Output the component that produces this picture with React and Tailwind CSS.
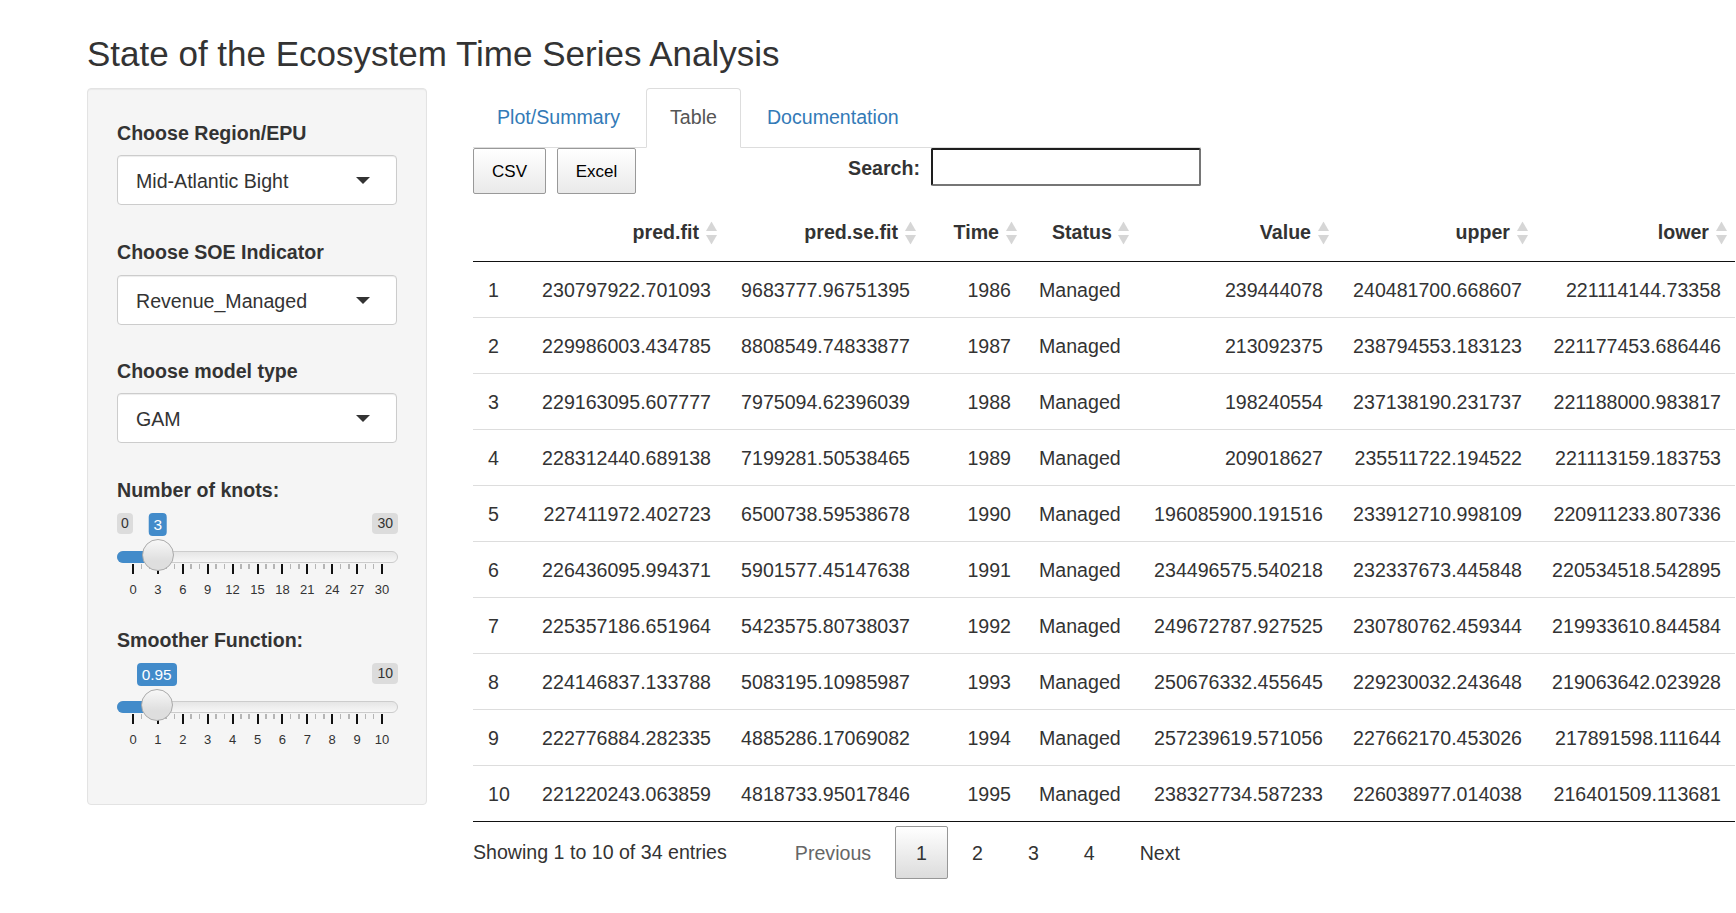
import React from "react";

const rows = [
  ["1", "230797922.701093", "9683777.96751395", "1986", "Managed", "239444078", "240481700.668607", "221114144.73358"],
  ["2", "229986003.434785", "8808549.74833877", "1987", "Managed", "213092375", "238794553.183123", "221177453.686446"],
  ["3", "229163095.607777", "7975094.62396039", "1988", "Managed", "198240554", "237138190.231737", "221188000.983817"],
  ["4", "228312440.689138", "7199281.50538465", "1989", "Managed", "209018627", "235511722.194522", "221113159.183753"],
  ["5", "227411972.402723", "6500738.59538678", "1990", "Managed", "196085900.191516", "233912710.998109", "220911233.807336"],
  ["6", "226436095.994371", "5901577.45147638", "1991", "Managed", "234496575.540218", "232337673.445848", "220534518.542895"],
  ["7", "225357186.651964", "5423575.80738037", "1992", "Managed", "249672787.927525", "230780762.459344", "219933610.844584"],
  ["8", "224146837.133788", "5083195.10985987", "1993", "Managed", "250676332.455645", "229230032.243648", "219063642.023928"],
  ["9", "222776884.282335", "4885286.17069082", "1994", "Managed", "257239619.571056", "227662170.453026", "217891598.111644"],
  ["10", "221220243.063859", "4818733.95017846", "1995", "Managed", "238327734.587233", "226038977.014038", "216401509.113681"],
];

const headers = [
  { t: "", align: "right", sort: false },
  { t: "pred.fit", align: "right", sort: true },
  { t: "pred.se.fit", align: "right", sort: true },
  { t: "Time", align: "right", sort: true },
  { t: "Status", align: "left", sort: true },
  { t: "Value", align: "right", sort: true },
  { t: "upper", align: "right", sort: true },
  { t: "lower", align: "right", sort: true },
];

function SortIcon() {
  return (
    <svg width="11" height="23" viewBox="0 0 11 23" className="absolute right-[8px] top-1/2 -translate-y-1/2">
      <path d="M5.5 0 L11 9.5 L0 9.5 Z" fill="#d6d6d6" />
      <path d="M0 13.5 L11 13.5 L5.5 23 Z" fill="#d6d6d6" />
    </svg>
  );
}

function Caret() {
  return (
    <svg width="14" height="7" viewBox="0 0 14 7" className="shrink-0">
      <path d="M0 0 L14 0 L7 7 Z" fill="#333333" />
    </svg>
  );
}

function SelectBox({ value }) {
  return (
    <div className="h-[50px] w-[280px] flex items-center justify-between pl-[18px] pr-[26px] bg-white border border-[#cccccc] rounded-[4px] shadow-[inset_0_1px_1px_rgba(0,0,0,0.075)] text-[19.6px] text-[#333333]">
      <span className="pt-[3px]">{value}</span>
      <Caret />
    </div>
  );
}

function Label({ children, className = "" }) {
  return <div className={"h-[28px] leading-[28px] text-[19.6px] font-bold text-[#333333] " + className}>{children}</div>;
}

function Slider({ max, value, label, showMin, ticks }) {
  const x0 = 16;
  const span = 249;
  const cx = x0 + (span * value) / max;
  const n = ticks.length - 1;
  const step = span / n;
  const minors = [];
  for (let i = 0; i < n; i++) {
    minors.push(x0 + step * i + step / 3);
    minors.push(x0 + step * i + (2 * step) / 3);
  }
  return (
    <div className="relative h-[95px] w-[281px]">
      {showMin && (
        <div className="absolute left-0 top-[9px] h-[21px] px-[4px] rounded-[4px] bg-[#dcdcdc] text-[14px] leading-[21px] text-[#333333]">0</div>
      )}
      <div className="absolute right-0 top-[9px] h-[21px] px-[5px] rounded-[4px] bg-[#dcdcdc] text-[14px] leading-[21px] text-[#333333]">{max}</div>
      <div
        className="absolute top-[9px] h-[23px] px-[5px] rounded-[4px] bg-[#428bca] text-white text-[15.4px] leading-[23px] -translate-x-1/2"
        style={{ left: cx }}
      >
        {label}
      </div>
      <div className="absolute left-0 top-[47px] h-[12px] w-[281px] rounded-full border border-[#cccccc] bg-[linear-gradient(to_bottom,#dddddd_-50%,#ffffff_150%)]" />
      <div className="absolute left-0 top-[47px] h-[12px] rounded-l-full bg-[#428bca]" style={{ width: cx }} />
      {minors.map((m, i) => (
        <div key={"m" + i} className="absolute top-[60px] h-[5px] w-[1.5px] bg-[#b5b5b5]" style={{ left: m - 0.75 }} />
      ))}
      {ticks.map((t, i) => (
        <div key={"t" + i} className="absolute top-[60px] h-[10px] w-[2px] bg-[#111111]" style={{ left: x0 + step * i - 1 }} />
      ))}
      {ticks.map((t, i) => (
        <div
          key={"l" + i}
          className="absolute top-[79px] text-[13px] leading-[14px] text-[#333333] -translate-x-1/2"
          style={{ left: x0 + step * i }}
        >
          {t}
        </div>
      ))}
      <div
        className="absolute top-[35px] h-[32px] w-[32px] rounded-full border border-[#aaaaaa] bg-[linear-gradient(to_bottom,#ffffff_-20%,#dedede_70%)] -translate-x-1/2"
        style={{ left: cx }}
      />
    </div>
  );
}

const gridCols = "grid grid-cols-[55px_197px_199px_101px_112px_200px_199px_199px]";

export default function App() {
  return (
    <div className="w-[1736px] h-[913px] overflow-hidden bg-white text-[#333333] font-['Liberation_Sans',Arial,sans-serif]">
      <div className="pl-[87px] pt-[34px]">
        <h2 className="h-[40px] leading-[40px] text-[35px] font-normal text-[#333333]">State of the Ecosystem Time Series Analysis</h2>
      </div>
      <div className="flex pl-[87px] mt-[14px]">
        {/* Sidebar */}
        <div className="w-[340px] h-[717px] shrink-0 bg-[#f5f5f5] border border-[#e3e3e3] rounded-[4px] shadow-[inset_0_1px_1px_rgba(0,0,0,0.05)] pl-[29px] pt-[30px]">
          <Label className="mb-[8px]">Choose Region/EPU</Label>
          <SelectBox value="Mid-Atlantic Bight" />
          <Label className="mt-[33px] mb-[9px]">Choose SOE Indicator</Label>
          <SelectBox value="Revenue_Managed" />
          <Label className="mt-[32px] mb-[8px]">Choose model type</Label>
          <SelectBox value="GAM" />
          <Label className="mt-[33px]">Number of knots:</Label>
          <Slider max={30} value={3} label="3" showMin={true} ticks={[0, 3, 6, 9, 12, 15, 18, 21, 24, 27, 30]} />
          <Label className="mt-[27px]">Smoother Function:</Label>
          <Slider max={10} value={0.95} label="0.95" showMin={false} ticks={[0, 1, 2, 3, 4, 5, 6, 7, 8, 9, 10]} />
        </div>

        {/* Main */}
        <div className="ml-[46px] w-[728px] shrink-0">
          {/* Tabs */}
          <div className="flex items-end h-[60px] border-b border-[#dddddd] text-[19.6px]">
            <div className="ml-[1px] mr-[3px] h-[59px] px-[22px] pt-[14px] border border-transparent leading-[28px] text-[#337ab7]">Plot/Summary</div>
            <div className="mr-[3px] h-[60px] -mb-px px-[23px] pt-[14px] border border-[#dddddd] border-b-white bg-white rounded-t-[4px] leading-[28px] text-[#555555]">Table</div>
            <div className="h-[59px] px-[22px] pt-[14px] border border-transparent leading-[28px] text-[#337ab7]">Documentation</div>
          </div>

          {/* Toolbar */}
          <div className="flex justify-between items-start h-[46px] mb-[11px]">
            <div className="flex gap-[11px]">
              <div className="h-[46px] w-[73px] flex items-center justify-center pt-[1px] border border-[#999999] rounded-[2px] bg-[linear-gradient(to_bottom,#ffffff_0%,#e9e9e9_100%)] text-[17px] text-black">CSV</div>
              <div className="h-[46px] w-[79px] flex items-center justify-center pt-[1px] border border-[#999999] rounded-[2px] bg-[linear-gradient(to_bottom,#ffffff_0%,#e9e9e9_100%)] text-[17px] text-black">Excel</div>
            </div>
            <div className="flex items-start">
              <div className="mt-[6px] mr-[11px] leading-[28px] text-[19.6px] font-bold text-[#333333]">Search:</div>
              <div className="h-[38px] w-[270px] bg-white border-2 border-solid border-t-[#1e1e1e] border-l-[#1e1e1e] border-r-[#767676] border-b-[#767676] rounded-[2px]" />
            </div>
          </div>

          {/* Table */}
          <div className="w-[1262px] text-[19.6px] text-[#333333]">
            <div className={gridCols + " h-[57px] border-b border-[#111111] font-bold"}>
              {headers.map((h, i) => (
                <div
                  key={i}
                  className={
                    "relative flex items-center whitespace-nowrap " +
                    (h.align === "right" ? "justify-end pr-[26px]" : "justify-start pl-[27px]")
                  }
                >
                  {h.t}
                  {h.sort && <SortIcon />}
                </div>
              ))}
            </div>
            {rows.map((r, ri) => (
              <div
                key={ri}
                className={
                  gridCols +
                  (ri === 0 ? " h-[55px]" : " h-[56px] border-t border-[#dddddd]") +
                  (ri === rows.length - 1 ? " border-b border-b-[#111111] h-[57px]" : "")
                }
              >
                {r.map((c, ci) => (
                  <div
                    key={ci}
                    className={
                      "flex items-center whitespace-nowrap pt-[2px] " +
                      (ci === 0 ? "pl-[15px]" : ci === 4 ? "pl-[14px]" : "justify-end pr-[14px]")
                    }
                  >
                    {c}
                  </div>
                ))}
              </div>
            ))}
          </div>

          {/* Footer */}
          <div className="flex justify-between items-start mt-[4px] text-[19.6px]">
            <div className="mt-[12px] leading-[28px] text-[#333333]">Showing 1 to 10 of 34 entries</div>
            <div className="flex items-center gap-[3px]">
              <div className="h-[53px] flex items-center pt-[2px] px-[20px] border border-transparent text-[#666666]">Previous</div>
              <div className="h-[53px] flex items-center pt-[2px] px-[20px] border border-[#979797] rounded-[2px] bg-[linear-gradient(to_bottom,#ffffff_0%,#dcdcdc_100%)] text-[#333333]">1</div>
              <div className="h-[53px] flex items-center pt-[2px] px-[20px] border border-transparent text-[#333333]">2</div>
              <div className="h-[53px] flex items-center pt-[2px] px-[20px] border border-transparent text-[#333333]">3</div>
              <div className="h-[53px] flex items-center pt-[2px] px-[20px] border border-transparent text-[#333333]">4</div>
              <div className="h-[53px] flex items-center pt-[2px] px-[20px] border border-transparent text-[#333333]">Next</div>
            </div>
          </div>
        </div>
      </div>
    </div>
  );
}
